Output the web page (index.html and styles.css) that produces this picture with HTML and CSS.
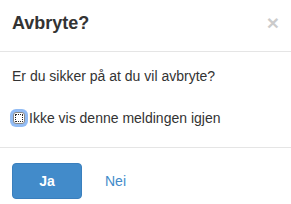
FILE: index.html
```html
<html><head><title>Avbryte?</title>
<link rel="stylesheet" href="styles.css">
</head>
<body>
<div class="modal">
  <div class="modal-header">
    <h4 class="modal-title">Avbryte?</h4>
    <button class="close" type="button">&times;</button>
  </div>
  <div class="modal-body">
    <p>Er du sikker på at du vil avbryte?</p>
    <label class="checkbox">
      <input type="checkbox" class="focus-box">
      <span>Ikke vis denne meldingen igjen</span>
    </label>
  </div>
  <div class="modal-footer">
    <button class="btn btn-primary" type="button">Ja</button>
    <button class="btn btn-link" type="button">Nei</button>
  </div>
</div>
</body></html>
```

FILE: styles.css
```css
body {
  margin: 0;
  background: #fff;
  color: #333;
  font-family: 'Liberation Sans', Arial, sans-serif;
  font-size: 14px;
  line-height: 20px;
}
.modal {
  width: 291px;
}
.modal-header {
  display: flex;
  align-items: flex-start;
  justify-content: space-between;
  padding: 11px 12px 15px 12px;
  border-bottom: 1px solid #e5e5e5;
}
.modal-title {
  margin: 0;
  font-size: 18px;
  line-height: 25px;
  font-weight: bold;
  color: #333;
}
.close {
  padding: 0;
  margin: 0;
  border: 0;
  background: none;
  font-family: 'Liberation Sans', Arial, sans-serif;
  font-size: 21px;
  font-weight: bold;
  line-height: 21px;
  color: #000;
  opacity: 0.2;
  margin-top: 1px;
}
.modal-body {
  padding: 14px 12px 19px 12px;
}
.modal-body p {
  margin: 0 0 22px 0;
}
.checkbox {
  display: flex;
  align-items: center;
}
.focus-box {
  appearance: none;
  -webkit-appearance: none;
  width: 12px;
  height: 12px;
  margin: 0 4px 0 1px;
  border: 1px solid #8a8a8a;
  border-radius: 3px;
  background: #fff;
  box-shadow: 0 0 0 3px rgba(110, 165, 240, 0.75);
  outline: 1px dotted #222;
  outline-offset: -3px;
}
.modal-footer {
  display: flex;
  align-items: center;
  padding: 15px 12px 8px 12px;
  border-top: 1px solid #e5e5e5;
}
.btn {
  font-family: 'Liberation Sans', Arial, sans-serif;
  font-size: 14px;
  line-height: 20px;
  padding: 7px 0;
  border-radius: 4px;
  border: 1px solid transparent;
  cursor: pointer;
}
.btn-primary {
  width: 70px;
  background: #428bca;
  border-color: #3a7fbd;
  color: #fff;
  font-weight: bold;
}
.btn-link {
  background: none;
  color: #428bca;
  margin-left: 22px;
}
```
